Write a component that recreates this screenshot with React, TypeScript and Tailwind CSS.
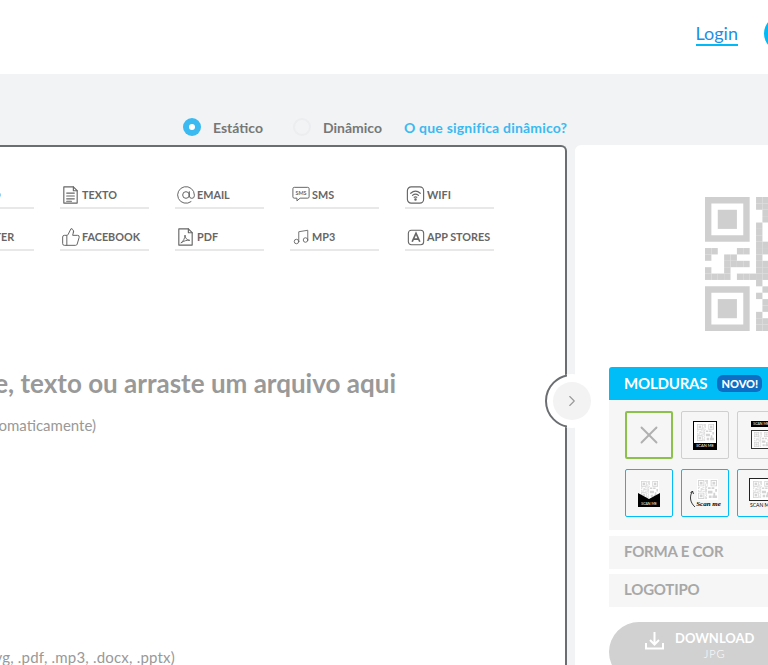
import type { ReactNode } from "react"
import { AtSign, ChevronRight, Music, ThumbsUp, X } from "lucide-react"

// modules of the code outside the finder squares: [row, col]
const QR_ROWS: Record<number, number[]> = {
  0: [8, 9, 10], 1: [8, 9, 10], 2: [9, 10], 3: [9, 10], 4: [8, 10], 5: [8], 6: [8, 10], 7: [8, 9],
  8: [0, 1, 5, 6, 8, 9], 9: [0, 3, 4, 8], 10: [3, 4, 5, 6, 8, 9], 11: [0, 3, 8, 9], 12: [0, 1, 2, 3, 5, 6, 7, 8, 9],
  13: [8], 14: [9], 15: [8], 16: [9], 17: [9], 18: [8], 19: [8, 9], 20: [8, 9],
}

const Finder = ({ x, y }: { x: number; y: number }) => (
  <g>
    <path fillRule="evenodd" d={`M${x} ${y}h7v7h-7zM${x + 1} ${y + 1}v5h5v-5z`} />
    <rect x={x + 2} y={y + 2} width="3" height="3" />
  </g>
)

const Qr = ({ size, color }: { size: number; color: string }) => (
  <svg width={size} height={size} viewBox="0 0 21 21" fill={color} className="shrink-0">
    <Finder x={0} y={0} />
    <Finder x={0} y={14} />
    <Finder x={14} y={0} />
    {Object.entries(QR_ROWS).map(([row, modules]) =>
      modules.map((col) => <rect key={`${row}-${col}`} x={col} y={Number(row)} width="1" height="1" />)
    )}
    <path d="M11 8h3v2h-3zM15 8h3v2h-3zM19 10h2v3h-2zM11 12h5v3h-5zM17 14h2v3h-2zM12 17h3v3h-3zM16 17h5v3h-5z" />
  </svg>
)

const Icon = ({ children }: { children: ReactNode }) => (
  <svg width="22" height="22" viewBox="0 0 22 22" fill="none" stroke="#666" strokeWidth="1.2" strokeLinejoin="round" strokeLinecap="round">
    {children}
  </svg>
)

const TextIcon = () => (
  <Icon>
    <path d="M4 2.500h10l4 4v13H4z" />
    <path d="M14 2.500v4h4M7 9h8M7 12h8M7 15h8M7 17.500h5" />
  </Icon>
)

const SmsIcon = () => (
  <svg width="18" height="18" viewBox="0 0 20 20" fill="none" stroke="#666" strokeWidth="1.1" strokeLinejoin="round">
    <path d="M2.500 1.500h15a1.500 1.500 0 0 1 1.500 1.500v9a1.500 1.500 0 0 1-1.500 1.500H9l-3.500 3v-3h-3A1.500 1.500 0 0 1 1 12V3a1.500 1.500 0 0 1 1.500-1.500z" />
    <text x="10" y="10" textAnchor="middle" fontSize="6" fontWeight="700" fill="#666" stroke="none" fontFamily="Lato, sans-serif">SMS</text>
  </svg>
)

const WifiIcon = () => (
  <Icon>
    <rect x="2.500" y="2.500" width="17" height="17" rx="4" />
    <path d="M6 9.200c3-2.600 7-2.600 10 0M7.800 11.400c2-1.600 4.400-1.600 6.400 0M9.600 13.400c.9-.6 1.900-.6 2.800 0" />
    <circle cx="11" cy="15.600" r=".7" fill="#666" />
  </Icon>
)

const PdfIcon = () => (
  <Icon>
    <path d="M4 2.500h10l4 4v13H4z" />
    <path d="M14 2.500v4h4" />
    <path d="M6.500 17c2-1 4-5 4-8 0 3 2 5.500 5 5.500-3-.5-6 .5-9 2.500z" strokeWidth="1" />
  </Icon>
)

const StoreIcon = () => (
  <svg width="18" height="17" viewBox="0 0 21 20" fill="none" stroke="#666" strokeWidth="1.300">
    <rect x="1.500" y="1.500" width="18" height="17" rx="3.500" />
    <path d="M6 15 10.500 5 15 15M7.500 11.800h6" strokeWidth="2" />
  </svg>
)

const TYPES: { label: string; icon: ReactNode }[][] = [
  [
    { label: "VÍDEO", icon: <TextIcon /> },
    { label: "TEXTO", icon: <TextIcon /> },
    { label: "EMAIL", icon: <AtSign size={20} strokeWidth={1.2} color="#666" /> },
    { label: "SMS", icon: <SmsIcon /> },
    { label: "WIFI", icon: <WifiIcon /> },
  ],
  [
    { label: "TWITTER", icon: <TextIcon /> },
    { label: "FACEBOOK", icon: <ThumbsUp size={20} strokeWidth={1.2} color="#666" /> },
    { label: "PDF", icon: <PdfIcon /> },
    { label: "MP3", icon: <Music size={18} strokeWidth={1.2} color="#666" /> },
    { label: "APP STORES", icon: <StoreIcon /> },
  ],
]

const Thumb = ({ border, children }: { border: string; children?: ReactNode }) => (
  <div className={`w-12 h-12 shrink-0 rounded-[2px] flex flex-col items-center justify-center ${border}`}>{children}</div>
)

const Section = ({ label }: { label: string }) => (
  <div className="h-[33px] bg-[#f6f6f6] pl-[15px] pb-[3px] flex items-center text-[15px] font-bold tracking-[-0.2px] text-[#a8a8a8]">{label}</div>
)

export default function App() {
  return (
    <div className="relative w-[768px] h-[665px] overflow-hidden bg-[#f1f3f5] font-['Lato',sans-serif]">
      <header className="h-[74px] bg-white flex items-start justify-end">
        <a className="mt-[21px] h-[25px] border-b-2 border-[#00b9f5] text-[18px] leading-[24px] text-[#1f8fe3]">Login</a>
        <div className="ml-[26px] -mr-[31px] mt-[16px] w-[35px] h-[35px] rounded-full bg-[#00b9f5]" />
      </header>

      <div className="h-[71px] pl-[183px] pt-[44px] flex items-start">
        <div className="flex items-center h-[18px] text-[14px] font-bold text-[#777]">
          <span className="w-[18px] h-[18px] rounded-full bg-[#3bb9f1] flex items-center justify-center">
            <span className="w-[6px] h-[6px] rounded-full bg-white" />
          </span>
          <span className="ml-[12px] w-[68px]">Estático</span>
          <span className="ml-[12px] w-[18px] h-[18px] rounded-full border-2 border-[#ebedef]" />
          <span className="ml-[12px] w-[81px]">Dinâmico</span>
          <span className="text-[#3bb9f1] whitespace-nowrap tracking-[0.2px]">O que significa dinâmico?</span>
        </div>
      </div>

      <main className="flex items-stretch h-[520px] -ml-[200px] gap-2">
        <section className="w-[767px] shrink-0 bg-white border-t-2 border-r-2 border-[#6b6e70] rounded-tr-[6px] relative">
          <div className="pl-[145px] pt-[35px] flex flex-col gap-[15px]">
            {TYPES.map((row, i) => (
              <div key={i} className="flex gap-[26px]">
                {row.map((t) => (
                  <div key={t.label} className="w-[89px] h-[27px] pt-[2px] border-b-2 border-[#e8e8e8] flex items-start gap-px whitespace-nowrap">
                    <span className="w-[21px] h-[22px] shrink-0 flex items-center justify-center">{t.icon}</span>
                    <span className="text-[10.800px] leading-[22px] font-bold text-[#666]">{t.label}</span>
                  </div>
                ))}
              </div>
            ))}
          </div>

          <div className="mt-[115px] w-[596px] text-right whitespace-nowrap text-[26px] leading-[34px] font-bold text-[#999]">
            Digite um site, texto ou arraste um arquivo aqui
          </div>
          <div className="mt-[15px] w-[296px] text-right whitespace-nowrap text-[15px] leading-[20px] text-[#999]">
            (O QR Code será gerado automaticamente)
          </div>
          <div className="mt-[212px] w-[375px] text-right whitespace-nowrap text-[15px] leading-[20px] tracking-[0.2px] text-[#999]">
            (Arquivos: .jpg, .png, .svg, .pdf, .mp3, .docx, .pptx)
          </div>
        </section>

        <aside className="w-[300px] shrink-0 bg-white rounded-tl-[6px] pl-[34px] pt-[52px]">
          <div className="h-[170px] pl-[96px]">
            <Qr size={134} color="#cfcfcf" />
          </div>

          <div className="w-[200px]">
            <div className="h-[33px] bg-[#00bcf7] rounded-t-[3px] pl-[15px] flex items-center text-white">
              <span className="text-[15px] font-bold tracking-[-0.2px]">MOLDURAS</span>
              <span className="ml-[10px] w-[45px] h-[17px] rounded-[6px] bg-[#0d6ec4] text-center text-[11px] leading-[17px] font-black">NOVO!</span>
            </div>

            <div className="h-[130px] bg-[#f6f6f6] pl-4 pt-[11px] flex flex-col gap-[10px]">
              <div className="flex gap-2">
                <Thumb border="border-2 border-[#8bc34a]">
                  <X size={30} strokeWidth={1.5} color="#b0b0b0" />
                </Thumb>
                <Thumb border="border border-[#cfcfcf]">
                  <div className="w-[24px] border border-black bg-white flex flex-col items-center pt-[2px]">
                    <Qr size={17} color="#d4d4d4" />
                    <div className="mt-[2px] w-full bg-black text-white text-[4px] leading-[6px] text-center">SCAN ME</div>
                  </div>
                </Thumb>
                <Thumb border="border border-[#cfcfcf]">
                  <div className="w-[20px] bg-black text-white text-[3.500px] leading-[6px] text-center whitespace-nowrap">SCAN ME</div>
                  <div className="mt-[3px] w-[20px] h-[19px] border border-[#333] bg-white flex justify-center pt-px overflow-hidden">
                    <Qr size={15} color="#d4d4d4" />
                  </div>
                </Thumb>
              </div>
              <div className="flex gap-2">
                <Thumb border="border border-[#00bcf7]">
                  <div className="relative w-[22px] h-[27px] flex flex-col items-center">
                    <div className="bg-white p-px">
                      <Qr size={17} color="#d4d4d4" />
                    </div>
                    <svg className="absolute left-0 bottom-0" width="22" height="14" viewBox="0 0 22 14" fill="#000">
                      <path d="M0 0 11 6 22 0v14H0z" />
                      <text x="11" y="12" textAnchor="middle" fontSize="3.500" fill="#fff" fontFamily="Lato, sans-serif">SCAN ME</text>
                    </svg>
                  </div>
                </Thumb>
                <Thumb border="border border-[#00bcf7]">
                  <div className="bg-white p-px ml-[4px]">
                    <Qr size={19} color="#d4d4d4" />
                  </div>
                  <div className="flex items-end">
                    <svg className="-mt-[10px]" width="7" height="18" viewBox="0 0 7 18" fill="none" stroke="#222" strokeWidth="0.9">
                      <path d="M3.500 1C.5 6 .5 12 6 17M1.500 3l2-2 1 3" />
                    </svg>
                    <div className="font-['Liberation_Serif',serif] italic font-bold text-[7px] leading-[7px] text-black whitespace-nowrap">Scan me</div>
                  </div>
                </Thumb>
                <Thumb border="border border-[#00bcf7]">
                  <div className="w-[24px] h-[23px] border border-[#222] bg-white flex items-center justify-center">
                    <Qr size={17} color="#d4d4d4" />
                  </div>
                  <div className="text-[5px] leading-[8px] text-black">SCAN ME</div>
                </Thumb>
              </div>
            </div>

            <div className="mt-[6px] flex flex-col gap-[5px]">
              <Section label="FORMA E COR" />
              <Section label="LOGOTIPO" />
            </div>

            <button className="mt-[15px] w-[206px] h-[60px] rounded-full bg-[#d1d1d1] flex items-start gap-[11px] pl-[36px] pt-[7px] text-white">
              <svg className="mt-[2px]" width="19" height="19" viewBox="0 0 19 19" fill="none" stroke="#fff" strokeWidth="2">
                <path d="M9.500 1v12M5 9l4.500 4.500L14 9M1 12v5.500h17V12" />
              </svg>
              <span className="flex flex-col items-center">
                <span className="text-[13px] leading-[18px] font-bold">DOWNLOAD</span>
                <span className="text-[11px] leading-[14px] font-light tracking-[1px]">JPG</span>
              </span>
            </button>
          </div>
        </aside>
      </main>

      {/* round toggle between the two panels */}
      <div className="absolute left-[545px] top-[374px] w-[54px] h-[54px] rounded-full bg-white flex items-center justify-center">
        <div className="absolute left-0 top-0 w-[22px] h-[54px] overflow-hidden">
          <div className="w-[54px] h-[54px] rounded-full border-2 border-[#6b6e70]" />
        </div>
        <div className="w-[38px] h-[38px] rounded-full bg-[#f3f3f3] flex items-center justify-center">
          <ChevronRight size={18} strokeWidth={1.5} color="#999" />
        </div>
      </div>
    </div>
  )
}
